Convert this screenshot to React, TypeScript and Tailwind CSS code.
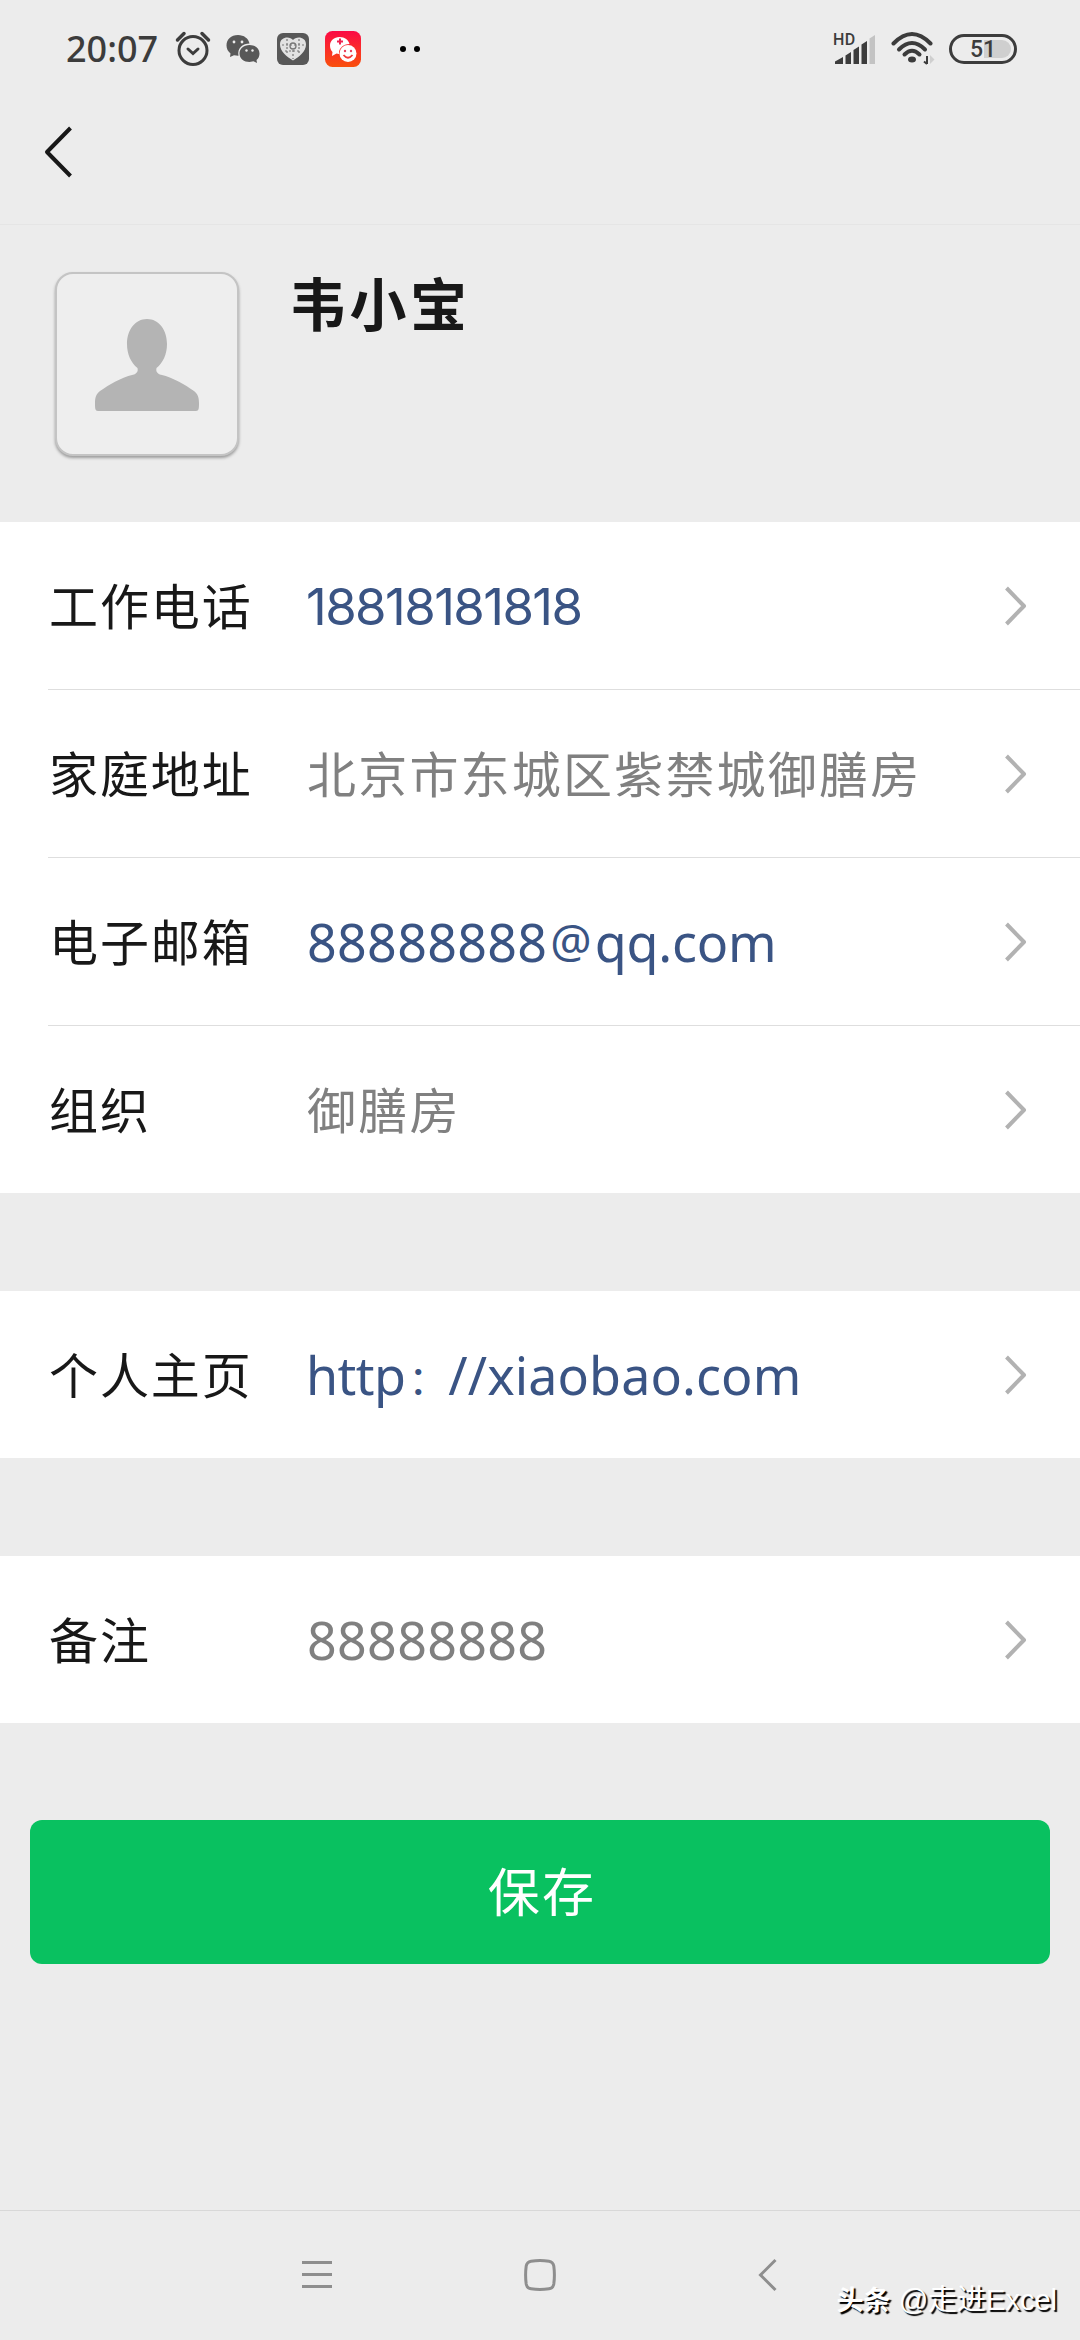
// src/App.tsx

import type { ReactNode } from 'react';

function ChevronRight() {
  return (
    <svg className="w-[24px] h-[40px] shrink-0" viewBox="0 0 24 40" fill="none" stroke="#b2b2b2" strokeWidth="4">
      <path d="M2.5 2 L20 20 L2.5 38" strokeLinejoin="round" />
    </svg>
  );
}

function Row({ label, last, children }: { label: string; last?: boolean; children: ReactNode }) {
  return (
    <div className={last ? 'h-[167px] pl-[48px]' : 'h-[168px] pl-[48px]'}>
      <div className={last ? 'h-full flex items-center pr-[52px]' : 'h-full flex items-center pr-[52px] border-b border-[#dedede]'}>
        <div className="w-[258px] pl-[1px] pt-[1px] text-[49px] leading-[72px] tracking-[1.9px] text-[#181818] whitespace-nowrap">{label}</div>
        <div className="flex-grow flex whitespace-nowrap leading-[72px]">{children}</div>
        <ChevronRight />
      </div>
    </div>
  );
}

function StatusBar() {
  return (
    <div className="h-[98px] pl-[66px] pr-[63px] flex items-center text-[#3c3c3c]">
      <div className="w-[94px] font-['Noto_Sans'] font-medium text-[36px] leading-[40px] whitespace-nowrap">20:07</div>
      <svg className="ml-[15px] w-[36px] h-[36px]" viewBox="0 0 36 36" fill="none" stroke="#3c3c3c" strokeWidth="3">
        <circle cx="18" cy="19.5" r="14" />
        <path d="M2.5 9 L9 2.5 M33.5 9 L27 2.5" strokeWidth="3.5" strokeLinecap="round" />
        <path d="M13 18 L18 22.5 L23 18" strokeLinecap="round" />
      </svg>
      <svg className="ml-[15px] w-[34px] h-[30px]" viewBox="0 0 34 30" fill="#585858">
        <path d="M12 1 C5 1 0.5 5.5 0.5 11.5 C0.5 14.5 2 17.5 4.5 19.5 L4 23 L8 21.2 C9.5 21.5 11 21.7 12 21.7 L12.5 21.7 C11 14 17 9.5 23.5 9.5 C22.5 4.5 18 1 12 1 Z" />
        <path d="M23.5 11 C17.5 11 13.5 15 13.5 19.5 C13.5 24.5 18 28 23.5 28 L27.5 27.3 L31 29 L30.5 26 C32.5 24.5 33.5 22 33.5 19.5 C33.5 14.5 29 11 23.5 11 Z" />
        <g fill="#ececec">
          <circle cx="8" cy="8" r="1.4" />
          <circle cx="16" cy="8" r="1.4" />
          <circle cx="20.5" cy="16.5" r="1.2" />
          <circle cx="26.5" cy="16.5" r="1.2" />
        </g>
      </svg>
      <svg className="ml-[16px] w-[34px] h-[34px]" viewBox="0 0 34 34">
        <rect x="1" y="1" width="32" height="32" rx="6" fill="#585858" />
        <path d="M17 28.5 C11 25 4 19.5 4 12.5 C4 4.5 14 4 17 8 C20 4 30 4.5 30 12.5 C30 19.5 23 25 17 28.5 Z" fill="#e2e2e2" />
        <path d="M6 13 H28 M9 19 H25 M11 7 V22 M23 7 V22 M17 18 V27" stroke="#777" strokeWidth="1.2" strokeDasharray="2 2" />
        <circle cx="17" cy="14" r="3" fill="none" stroke="#777" strokeWidth="1.3" />
      </svg>
      <svg className="ml-[15px] w-[36px] h-[36px]" viewBox="0 0 36 36">
        <defs>
          <linearGradient id="chatBg" x1="0" y1="0" x2="0" y2="1">
            <stop offset="0" stopColor="#fb0a45" />
            <stop offset="1" stopColor="#f9500c" />
          </linearGradient>
        </defs>
        <rect width="36" height="36" rx="7.5" fill="url(#chatBg)" />
        <path d="M14.5 6 C9 6 5 10 5 14.5 C5 17.5 6 19.5 7.5 21 L7 25 L11.5 22.5 L14 23 C13.5 17.5 18 13 24.5 13 C23.5 9 20 6 14.5 6 Z" fill="#fff" />
        <path d="M15 7.5 V13.5 M12 10.5 H18" stroke="#ef2350" strokeWidth="2" />
        <circle cx="23" cy="22.5" r="8.5" fill="#fff" />
        <circle cx="20" cy="20" r="1.2" fill="#e8425f" />
        <circle cx="26" cy="20" r="1.2" fill="#e8425f" />
        <path d="M18.5 24 Q23 29.5 27.5 24" stroke="#ef3b3b" strokeWidth="1.8" fill="none" />
      </svg>
      <div className="ml-[39px] flex gap-[8px]">
        <span className="w-[6px] h-[6px] rounded-full bg-black" />
        <span className="w-[6px] h-[6px] rounded-full bg-black" />
      </div>

      <svg className="ml-auto w-[44px] h-[34px] overflow-visible" viewBox="0 0 44 34" fill="#3c3c3c">
        <text x="0" y="13" fontFamily="Roboto" fontWeight="500" fontSize="16" letterSpacing="0.5">HD</text>
        <path d="M2 32 V29.5 L10 25 V32 Z" />
        <path d="M12.5 32 V23.5 L18 20 V32 Z" />
        <path d="M20.5 32 V18 L26 14.5 V32 Z" />
        <path d="M28.5 32 V12.5 L34 9 V32 Z" />
        <path d="M36.5 32 V6.5 L42 3 V32 Z" fill="#c3c3c3" />
      </svg>
      <svg className="ml-[14px] w-[46px] h-[36px]" viewBox="0 0 46 36" fill="none" stroke="#3c3c3c" strokeWidth="4">
        <path d="M2.5 12.5 Q21 -6.5 39.5 12.5" strokeLinecap="round" />
        <path d="M8 18.5 Q21 5.5 34 18.5" strokeLinecap="round" />
        <path d="M13.5 23.5 Q21 16 28.5 23.5" strokeLinecap="round" />
        <ellipse cx="21" cy="28.5" rx="4" ry="3" fill="#3c3c3c" stroke="none" />
        <path d="M36 25 V33 M36 33 L33 30.5" strokeWidth="2" />
        <path d="M39 33 V24 L43.5 28.5 Z" fill="#cfcfcf" stroke="none" />
      </svg>
      <div className="ml-[12px] w-[68px] h-[30px] rounded-full border-[3px] border-[#3c3c3c] p-[3px] flex">
        <div className="w-full rounded-full bg-linear-to-r from-transparent from-52% to-[#cfcfcf] to-52% font-['Roboto'] font-medium text-[23px] leading-[19px] text-center">51</div>
      </div>
    </div>
  );
}

export default function App() {
  return (
    <div className="w-[1080px] h-[2340px] flex flex-col bg-[#ececec] font-['Noto_Sans','Noto_Sans_CJK_SC',sans-serif] overflow-hidden">
      <StatusBar />
      <div className="h-[127px] pl-[43px] pt-[28px] border-b border-[#e5e5e5]">
        <svg className="w-[32px] h-[52px]" viewBox="0 0 32 52" fill="none" stroke="#181818" strokeWidth="4">
          <path d="M27.5 2 L4 26 L27.5 50" strokeLinejoin="round" />
        </svg>
      </div>

      <div className="h-[297px] pl-[55px] pt-[47px] flex items-start">
        <div className="w-[184px] h-[184px] rounded-[18px] border-2 border-[#c4c4c4] bg-[#eeeeee] shadow-[0_2px_3px_#9c9c9c] flex justify-center">
          <svg className="mt-[43px] w-[106px] h-[96px]" viewBox="0 0 106 96" fill="#b4b4b4">
            <path d="M53 2 C41 2 33 13 33 27 C33 37 37 46 43.5 51 C44.5 55 42 57 39 57.8 C26 61 15 68 6 74 C2 77 1 81 1 86 C1 91 1 94 4 94 H102 C105 94 105 91 105 86 C105 81 104 77 100 74 C91 68 80 61 67 57.8 C64 57 61.5 55 62.5 51 C69 46 73 37 73 27 C73 13 65 2 53 2 Z" />
          </svg>
        </div>
        <h1 className="ml-[50px] mt-[-10px] text-[57px] leading-[84px] tracking-[3.5px] font-bold text-[#181818]">韦小宝</h1>
      </div>

      <div className="bg-white">
        <Row label="工作电话">
          <span className="pt-[2px] font-['Inter'] text-[51px] tracking-[-1.6px] text-[#3a5484]">18818181818</span>
        </Row>
        <Row label="家庭地址">
          <span className="pl-[1px] pt-[1px] text-[49px] tracking-[2.2px] text-[#808080]">北京市东城区紫禁城御膳房</span>
        </Row>
        <Row label="电子邮箱">
          <span className="pl-[1px] text-[52px] text-[#3a5484] tracking-[0.3px]">88888888</span>
          <span className="mx-[3px] text-[46px] leading-[68px] text-[#3a5484]">@</span>
          <span className="text-[52px] text-[#3a5484] tracking-[-0.2px]">qq.com</span>
        </Row>
        <Row label="组织" last>
          <span className="pl-[1px] pt-[1px] text-[49px] tracking-[2.2px] text-[#808080]">御膳房</span>
        </Row>
      </div>
      <div className="mt-[98px] bg-white">
        <Row label="个人主页" last>
          <span className="text-[52px] tracking-[-0.6px] text-[#3a5484]">http</span>
          <span className="ml-[3px] pt-[8px] text-[40px] leading-[64px] text-[#3a5484]">：</span>
          <span className="text-[52px] tracking-[0.1px] text-[#3a5484]">//xiaobao.com</span>
        </Row>
      </div>
      <div className="mt-[98px] bg-white">
        <Row label="备注" last>
          <span className="pl-[1px] text-[52px] tracking-[0.3px] text-[#808080]">88888888</span>
        </Row>
      </div>

      <button className="mx-[30px] mt-[97px] h-[144px] rounded-[12px] bg-[#09c160] text-white text-[52px] leading-[72px] tracking-[2.2px] pl-[4px]">保存</button>

      <div className="mt-auto h-[130px] border-t border-[#d8d8d8] flex items-start relative">
        <svg className="ml-[302px] mt-[49px] w-[30px] h-[30px]" viewBox="0 0 30 30" stroke="#8e8e8e" strokeWidth="3">
          <path d="M0 2.5 H30 M0 14.5 H30 M0 26.5 H30" />
        </svg>
        <svg className="ml-[191px] mt-[47px] w-[34px] h-[34px]" viewBox="0 0 34 34" fill="none" stroke="#8e8e8e" strokeWidth="3">
          <path d="M8 3.2 Q17 2 26 3.2 Q30 3.8 30.8 8 Q32 17 30.8 26 Q30 30.2 26 30.8 Q17 32 8 30.8 Q4 30.2 3.2 26 Q2 17 3.2 8 Q4 3.8 8 3.2 Z" />
        </svg>
        <svg className="ml-[200px] mt-[47px] w-[22px] h-[34px]" viewBox="0 0 22 34" fill="none" stroke="#8e8e8e" strokeWidth="3">
          <path d="M18.5 2 L3.5 17 L18.5 32" />
        </svg>
        <div className="absolute right-[23px] bottom-[19px] text-[29px] leading-[40px] text-white [text-shadow:2px_2px_1px_#000] whitespace-nowrap font-['Liberation_Sans','Noto_Sans_CJK_SC',sans-serif]">
          <span className="font-bold text-[27px]">头条</span> @走进Excel
        </div>
      </div>
    </div>
  );
}
